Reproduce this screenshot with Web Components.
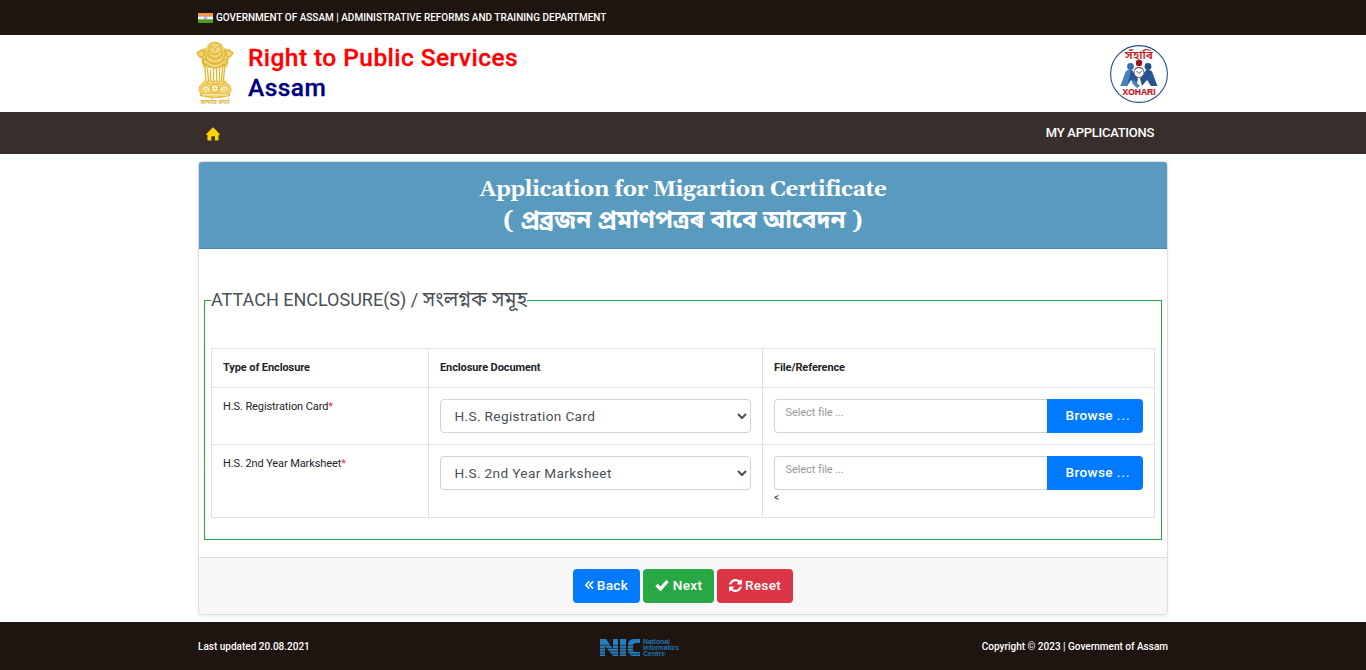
<!DOCTYPE html>
<html lang="en">
<head>
<meta charset="utf-8">
<title>Right to Public Services</title>
<style>
html,body{margin:0;padding:0;background:#fff}
body{font-family:Roboto,"Noto Sans Bengali","Noto Sans",sans-serif;color:#212529;height:670px;overflow:hidden}
</style>
</head>
<body>
<rtps-page></rtps-page>
<script>
const define = (name, css, html) => customElements.define(name, class extends HTMLElement {
  constructor(){
    super();
    const t = document.createElement('template');
    t.innerHTML = '<style>*{box-sizing:border-box}' + css + '</style>' + (typeof html === 'function' ? html(this) : html);
    this.attachShadow({mode:'open'}).append(t.content.cloneNode(true));
  }
});

define('india-flag', ':host{display:block;width:15px;height:10px}svg{display:block}',
`<svg width="15" height="10" viewBox="0 0 15 10"><path fill="#f3994a" d="M0 0h15v3.4H0z"/><path fill="#f3f3f3" d="M0 3.3h15v3.4H0z"/><path fill="#4f9a17" d="M0 6.7h15V10H0z"/><circle cx="7.5" cy="5" r="1.3" fill="#b9bde0" stroke="#8288c0" stroke-width=".5"/></svg>`);

define('top-bar', ':host{display:flex;height:35px;background:#1e1510;color:#fff;padding:0 198px;align-items:center;gap:3px;font-size:10px;font-weight:500;line-height:15px;white-space:nowrap}', '<india-flag></india-flag><span><slot></slot></span>');

define('state-emblem', ':host{display:block;width:38px;height:70px}svg{display:block;overflow:visible}',
`<svg width="38" height="70" viewBox="0 -1 38 70" fill="none" stroke="#e3b62b" stroke-linecap="round">
<path d="M12 3q7-5 14 0l2 4 5 1 4 4-3 3-2 3-1 9H7l-1-9-4-3-1-3 5-4 5-2z" fill="#f0d57e" stroke="none"/>
<circle cx="19" cy="7.5" r="6" stroke-width="1.2" stroke-dasharray="1.5 .7"/>
<path d="M15 6h2m4 0h2m-4 1v3m-3 2q3 2 6 0M1 12l4-3 4 2-1 4-4 1zm36 0-4-3-4 2 1 4 4 1z" stroke-width="1.2"/>
<path d="M10 9q-4 2-1 5t-1 5 2 6m18-16q4 2 1 5t1 5-2 6M12 14q3 4 7 4t7-4M10 18q4 5 9 5t9-5M10 23q5 4 9 4t9-4M13 10q-3 2 0 4m12-4q3 2 0 4M6 17q1 5 4 8m22-8q-1 5-4 8M15 16q4 4 8 0M12 20q7 5 14 0" stroke-width="1.5" stroke-dasharray="1.6 .6"/>
<path d="M9 27l1 13m1.500-12 1 12m2-11v11m3-12v12m3-12v12m3-12v12m3-13-1 13m3-13-1 13" stroke-width="1.300"/>
<path d="M8 40q3 2 5 0m2 0q2 2 4 0m1 0q2 2 4 0m1 0q3 2 5 0" stroke-width="1.1"/>
<path d="M7 42h24q7 5 2 11H5q-5-6 2-11z" fill="#efcf68" stroke-width=".8"/>
<circle cx="19" cy="47.500" r="3.800" fill="#fff" stroke-width="1.3"/><path d="M19 44.500v6m-3-3h6m-5-2 4 4m0-4-4 4" stroke-width=".5"/>
<path d="M7 49l2-3 3 1 1 3m12 0 1-3 4-1 1 3M10 48v3m18-3v3" stroke="#fffbe9" stroke-width="1"/>
<path d="M5 53q-2 2 3 2h22q5 0 3-2M9 55.500q10 2 20 0" stroke-width="1.2"/>
<text x="19" y="63" text-anchor="middle" textLength="29" lengthAdjust="spacingAndGlyphs" fill="#dfb43a" stroke="none" font-size="7" font-weight="700" font-family="'Noto Sans','Noto Sans Devanagari',sans-serif">सत्यमेव जयते</text></svg>`);

define('xohari-logo', ':host{display:block;width:60px;height:60px}svg{display:block}',
`<svg width="60" height="60" viewBox="0 0 60 60"><circle cx="30" cy="30" r="28.4" fill="#fff" stroke="#264f88" stroke-width="1.1"/>
<path d="M11.500 42 17 27.500q2-2.500 6-1.500l6 9-2 7-5-6-4 6zM48.500 42 43 27.500q-2-2.500-6-1.500l-6 9 2 7 5-6 4 6z" fill="#285493"/>
<path d="M11.500 42 17 27.500q2-2 5-1.500l-1 5-3 11zM24 35l7 7-3 2-5-5z" fill="#4382bd"/>
<circle cx="21.500" cy="22.500" r="3.4" fill="#326daf"/><circle cx="39" cy="22.500" r="3.4" fill="#244b83"/>
<circle cx="30" cy="19" r="3.200" fill="#990f19"/><path d="M25.500 27q0-4 4.500-4t4.500 4v3h-9z" fill="#b6222b"/>
<circle cx="30" cy="28.500" r="5" fill="#fff" stroke="#50545a" stroke-width=".9"/><path d="m27.500 27 2.500 2.500 3-2.500" fill="none" stroke="#333" stroke-width=".8"/>
<text x="30" y="15" text-anchor="middle" textLength="28" lengthAdjust="spacingAndGlyphs" fill="#c51f27" font-family="'Noto Sans Bengali',sans-serif" font-size="11.500" font-weight="600">সঁহাৰি</text>
<text x="30" y="51" text-anchor="middle" textLength="33" lengthAdjust="spacingAndGlyphs" fill="#c4161f" font-family="'Liberation Sans',sans-serif" font-size="8.2" font-weight="700" stroke="#c4161f" stroke-width=".2">XOHARI</text></svg>`);

define('brand-bar', `:host{display:flex;height:77px;padding:5px 197px 0 196px;justify-content:space-between;align-items:flex-start}
.l{display:flex;gap:14px}.t{font-size:24.5px;letter-spacing:.44px;line-height:30px;font-weight:500;padding-top:3px;color:navy;white-space:nowrap;-webkit-text-stroke:.3px currentColor}.t b{display:block;font-weight:500;color:red}xohari-logo{margin-top:4px}`,
'<div class="l"><state-emblem></state-emblem><div class="t"><b><slot name="title"></slot></b><slot name="state"></slot></div></div><xohari-logo></xohari-logo>');

define('nav-bar', ':host{display:flex;height:42px;background:#382e2c;padding:0 212px 0 206px;justify-content:space-between;align-items:center;color:#fff;font-size:13px;letter-spacing:-.27px;font-weight:500}svg{display:block;margin-top:1px}span{line-height:20px}',
`<svg width="14" height="14" viewBox="0 0 15 15"><path fill="#ffd500" d="M7.5.3 12 4.6V2.4 5L14.8 7.6q.2 1-.9 1h-.5v5q0 .9-.9.9H9.6V10H5.8v4.5H2.4q-.9 0-.9-.9v-5H.8q-1 0-.5-1z"/></svg><span><slot></slot></span>`);

define('card-title', `:host{display:flex;flex-direction:column;align-items:center;height:87px;padding-top:12px;background:#589bbf;border-bottom:1px solid #4a86a8;color:#fff;border-radius:3px 3px 0 0;font:700 22.4px/32px Georgia,Gelasio,"Noto Serif","Liberation Serif","Noto Sans Bengali",serif;white-space:nowrap}div{height:31px;letter-spacing:-.4px}.n{font-size:24.4px;letter-spacing:0}`, '<div><slot></slot></div><div class="n"><slot name="local"></slot></div>');

define('doc-select', ':host{display:block}select{display:block;width:100%;height:34px;border:1px solid #ced4da;border-radius:4px;background:#fff;color:#495057;font:400 13.6px Roboto,sans-serif;letter-spacing:.36px;padding:0 2px 0 9.500px;margin:0}',
h => `<select><option>${h.getAttribute('value')||''}</option></select>`);

define('file-field', `:host{display:flex;height:34px}.i{flex:1;border:1px solid #ced4da;border-right:0;border-radius:4px 0 0 4px;padding:5px 11px 5px 10.500px;font-size:11px;letter-spacing:-.08px;line-height:15px;color:#999}
.b{width:96px;background:#007bff;border-radius:0 4px 4px 0;color:#fff;font-size:13.6px;font-weight:500;letter-spacing:.36px;line-height:33px;padding-left:18.500px;white-space:nowrap}.b i{font-style:normal;font-weight:400;letter-spacing:1.1px}`, '<div class="i">Select file ...</div><div class="b">Browse <i>...</i></div>');

define('enclosure-table', `:host{display:grid;grid-template-columns:217px 334px 392px;grid-template-rows:39px 57px 73px;width:944px;height:170px;border:solid #dee2e6;border-width:1px 0 0 1px;font-size:11px;line-height:16px;box-sizing:border-box}
.c{border:solid #dee2e6;border-width:0 1px 1px 0;padding:11px}.c.h{font-weight:700;letter-spacing:-.1px}i{font-style:normal;color:#dc3545}.t{letter-spacing:-.1px}.f{font-size:10px;line-height:16px;color:#333}`,
`<div class="c h">Type of Enclosure</div><div class="c h">Enclosure Document</div><div class="c h">File/Reference</div>
<div class="c t">H.S. Registration Card<i>*</i></div><div class="c"><doc-select value="H.S. Registration Card"></doc-select></div><div class="c"><file-field></file-field></div>
<div class="c t">H.S. 2nd Year Marksheet<i>*</i></div><div class="c"><doc-select value="H.S. 2nd Year Marksheet"></doc-select></div><div class="c"><file-field></file-field><div class="f">&lt;</div></div>`);

define('enclosure-set', `:host{display:block;padding:38px 5px 0}fieldset{margin:0;padding:34px 6px 0;border:1px solid #28a745;height:253px;min-width:0}legend{padding:0;height:27px;font-size:18px;line-height:25px;color:#495057;white-space:nowrap}::slotted(span){font-size:19.900px;line-height:20px}`,
'<fieldset><legend><slot></slot></legend><enclosure-table></enclosure-table></fieldset>');

const icons = {
 back:'<svg width="9" height="10" viewBox="0 0 10 10"><path d="M4.8 1 1 5l3.8 4M9 1 5.2 5 9 9" fill="none" stroke="#fff" stroke-width="1.7"/></svg>',
 next:'<svg width="14" height="12" viewBox="0 0 14 12"><path d="m1.5 6 4 4 7-8" fill="none" stroke="#fff" stroke-width="3.3"/></svg>',
 reset:'<svg width="13" height="13" viewBox="0 0 1536 1536"><path fill="#fff" d="M1511 928q0 5-1 7-64 268-268 434.500T764 1536q-146 0-282.500-55T238 1324l-129 129q-19 19-45 19t-45-19-19-45V960q0-26 19-45t45-19h448q26 0 45 19t19 45-19 45l-137 137q71 66 161 102t187 36q134 0 250-65t186-179q11-17 53-117 8-23 30-23h192q13 0 22.500 9.500t9.500 22.500zm25-800v448q0 26-19 45t-45 19h-448q-26 0-45-19t-19-45 19-45l138-138Q969 256 768 256q-134 0-250 65T332 500q-11 17-53 117-8 23-30 23H50q-13 0-22.500-9.500T18 608v-7q65-268 270-434.500T768 0q146 0 284 55.500T1297 212l130-129q19-19 45-19t45 19 19 45z"/></svg>'
};
define('action-button', `:host{display:flex;align-items:center;justify-content:center;gap:3px;height:34px;padding-bottom:2px;box-sizing:border-box;border-radius:4px;color:#fff;font-size:13.6px;font-weight:500;letter-spacing:.3px;white-space:nowrap}
:host([kind=back]){width:67px;background:#007bff}:host([kind=next]){width:71px;background:#28a745;gap:4px}:host([kind=reset]){width:76px;background:#dc3545}svg{display:block}`,
h => icons[h.getAttribute('kind')] + '<span><slot></slot></span>');

define('app-card', `:host{display:block;width:970px;height:454px;margin:7px 0 0 198px;border:1px solid rgba(0,0,0,.125);border-radius:4px;box-shadow:0 2px 4px rgba(0,0,0,.075);background:#fff;box-sizing:border-box}
.body{height:308px}.foot{height:57px;background:#f7f7f7;border-top:1px solid #dcdcdc;display:flex;justify-content:center;gap:3px;padding-top:11px;border-radius:0 0 3px 3px}`,
`<card-title>Application for Migartion Certificate<span slot="local">( প্ৰব্ৰজন প্ৰমাণপত্ৰৰ বাবে আবেদন )</span></card-title>
<div class="body"><enclosure-set>ATTACH ENCLOSURE(S) / <span>সংলগ্নক সমূহ</span></enclosure-set></div>
<div class="foot"><action-button kind="back">Back</action-button><action-button kind="next">Next</action-button><action-button kind="reset">Reset</action-button></div>`);

define('nic-logo', ':host{display:block;width:82px;height:22px}svg{display:block}',
`<svg width="82" height="22" viewBox="0 0 82 22"><g fill="#237fc2"><path d="M1 2h6l7 10V2h5v17h-5L6 9v10H1zM21 2h6v17h-6zM41 6V2h-6q-6 0-6 6v5q0 6 6 6h6v-4h-4q-3 0-3-3V9q0-3 3-3z"/>
<g font-family="'Liberation Sans',sans-serif" font-size="6.6" font-weight="700" opacity=".9"><text x="44" y="7" textLength="27" lengthAdjust="spacingAndGlyphs">National</text><text x="44" y="13" textLength="36" lengthAdjust="spacingAndGlyphs">Informatics</text><text x="44" y="19" textLength="22" lengthAdjust="spacingAndGlyphs">Centre</text></g></g>
<path d="M0 8.3h42M0 11.3h42M0 14.2h42M0 17h42" stroke="#1e1510" stroke-width=".7"/></svg>`);

define('page-footer', `:host{display:grid;grid-template-columns:401px 82px 1fr;align-items:center;height:48px;margin-top:7px;background:#1e1510;color:#fff;padding:0 198px;font-size:10px;font-weight:500;line-height:15px}.r{text-align:right}nic-logo{margin-top:4px}`,
'<div><slot name="left"></slot></div><nic-logo></nic-logo><div class="r"><slot name="right"></slot></div>');

define('rtps-page', ':host{display:block;width:1366px;height:670px;overflow:hidden}',
`<top-bar>GOVERNMENT OF ASSAM | ADMINISTRATIVE REFORMS AND TRAINING DEPARTMENT</top-bar>
<brand-bar><span slot="title">Right to Public Services</span><span slot="state">Assam</span></brand-bar>
<nav-bar>MY APPLICATIONS</nav-bar>
<app-card></app-card>
<page-footer><span slot="left">Last updated 20.08.2021</span><span slot="right">Copyright © 2023 | Government of Assam</span></page-footer>`);
</script>
</body>
</html>
